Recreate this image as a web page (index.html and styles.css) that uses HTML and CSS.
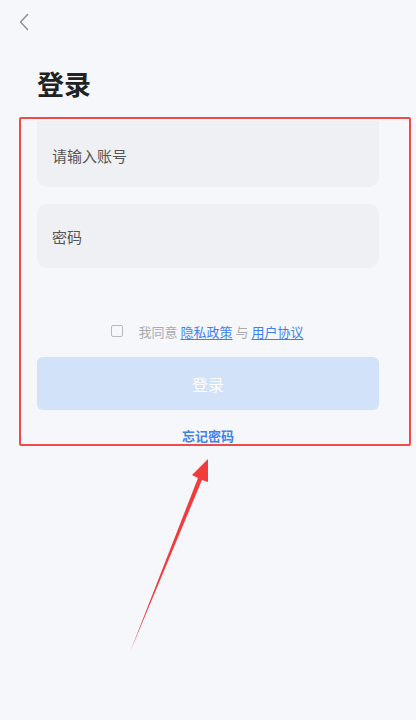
FILE: index.html
```html
<!DOCTYPE html>
<html lang="zh-CN">
<head>
    <meta charset="UTF-8">
    <meta name="viewport" content="width=device-width, initial-scale=1.0">
    <title>登录</title>
    <link rel="stylesheet" href="styles.css">
</head>
<body>

    <div class="page">
        <div class="nav">
            <svg class="back" width="10" height="18" viewBox="0 0 10 18">
                <path d="M8.5 1.5 L1.5 9 L8.5 16.5" fill="none" stroke="#8a8d94" stroke-width="1.4" stroke-linecap="round" stroke-linejoin="round"/>
            </svg>
        </div>

        <h1 class="title">登录</h1>

        <div class="highlight">
            <div class="form">
                <div class="field field-first">请输入账号</div>
                <div class="field">密码</div>

                <div class="agree">
                    <span class="check"></span>
                    <span class="agree-text">我同意 <a class="link">隐私政策</a> 与 <a class="link">用户协议</a></span>
                </div>

                <button type="button" class="login-btn">登录</button>

                <div class="forgot">忘记密码</div>
            </div>
        </div>

        <svg class="arrow" width="416" height="720" viewBox="0 0 416 720">
            <path d="M130 652 L198 478 L192 475 L208 459 L208 482 L202 480 Z" fill="#f23c3c"/>
        </svg>
    </div>

</body>
</html>
```

FILE: styles.css
```css
body {
    margin: 0;
    padding: 0;
    background-color: #f6f7fb;
    font-family: 'Noto Sans CJK SC', 'Noto Sans', sans-serif;
    color: #333;
}

.page {
    position: relative;
    width: 416px;
    height: 720px;
    overflow: hidden;
}

.nav {
    height: 44px;
    padding-left: 19px;
    padding-top: 13px;
    box-sizing: border-box;
}

.back {
    display: block;
}

.title {
    margin: 22px 0 0 37px;
    font-size: 27px;
    line-height: 36px;
    font-weight: bold;
    color: #222;
}

.highlight {
    margin: 15px 5px 0 19px;
    height: 329px;
    border: 2px solid #f04a4a;
    border-radius: 2px;
    box-sizing: border-box;
}

.form {
    padding: 2px 30px 0 16px;
}

.field {
    height: 64px;
    background-color: #eff0f4;
    border-radius: 10px;
    padding-left: 15px;
    display: flex;
    align-items: center;
    font-size: 15px;
    color: #555;
    box-sizing: border-box;
}

.field-first {
    height: 66px;
    padding-top: 3px;
    border-radius: 0 0 10px 10px;
}

.field + .field {
    margin-top: 17px;
}

.agree {
    margin-top: 50px;
    display: flex;
    align-items: center;
    justify-content: center;
    height: 26px;
    padding-right: 2px;
}

.check {
    width: 10px;
    height: 10px;
    border: 1px solid #b8b9bd;
    border-radius: 2px;
    margin-right: 16px;
}

.agree-text {
    font-size: 13px;
    color: #a9abb0;
}

.link {
    color: #3d83ee;
    text-decoration: underline;
    text-underline-offset: 2px;
}

.login-btn {
    display: block;
    width: 100%;
    height: 53px;
    margin-top: 13px;
    border: none;
    border-radius: 6px;
    background-color: #d2e2f8;
    color: #fff;
    font-family: inherit;
    font-size: 16px;
}

.forgot {
    margin-top: 17px;
    text-align: center;
    font-size: 13px;
    font-weight: bold;
    color: #3d83ee;
    line-height: 18px;
}

.arrow {
    position: absolute;
    left: 0;
    top: 0;
    pointer-events: none;
}
```
